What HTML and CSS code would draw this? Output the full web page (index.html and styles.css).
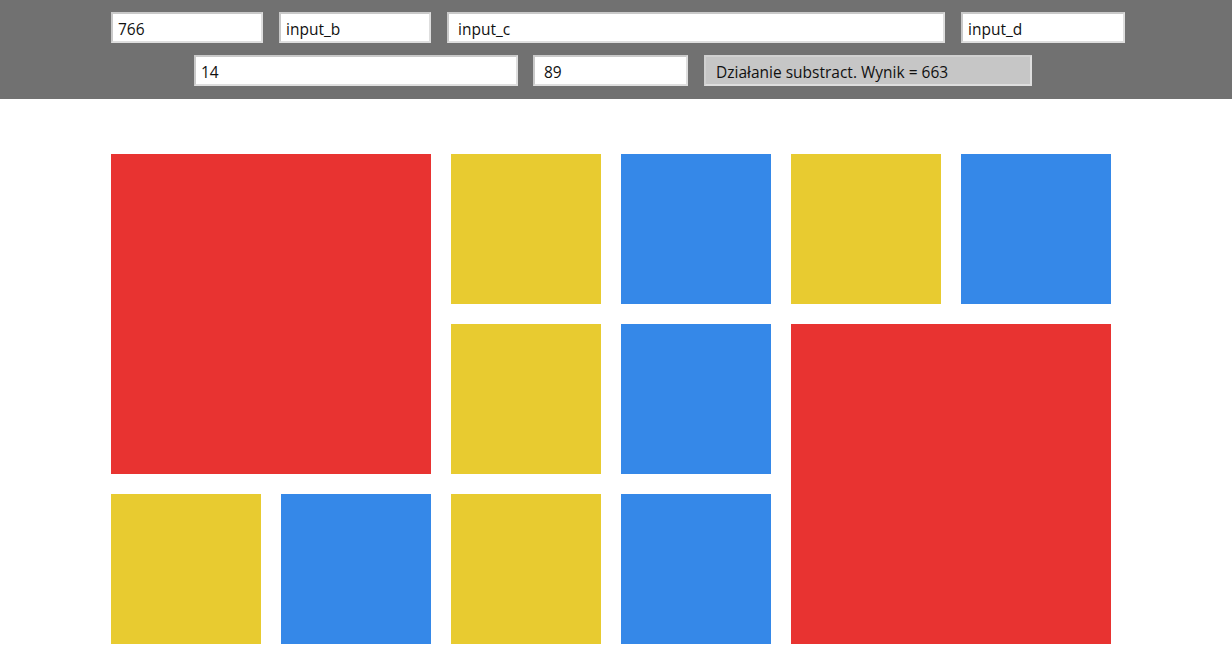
FILE: index.html
```html
<!DOCTYPE html>
<html lang="pl">
<head>
<meta charset="utf-8">
<title>Kalkulator</title>
<link rel="stylesheet" href="styles.css">
</head>
<body>
<header class="topbar">
  <div class="row row-one">
    <input class="field w-a" type="text" value="766">
    <input class="field w-b" type="text" value="input_b">
    <input class="field w-c wide-pad" type="text" value="input_c">
    <input class="field w-d" type="text" value="input_d">
  </div>
  <div class="row row-two">
    <input class="field w-e" type="text" value="14">
    <input class="field w-f wide-pad" type="text" value="89">
    <div class="result">Działanie substract. Wynik = 663</div>
  </div>
</header>
<main class="board">
  <div class="tile red big"></div>
  <div class="tile yellow"></div>
  <div class="tile blue"></div>
  <div class="tile yellow"></div>
  <div class="tile blue"></div>
  <div class="tile yellow"></div>
  <div class="tile blue"></div>
  <div class="tile red big"></div>
  <div class="tile yellow"></div>
  <div class="tile blue"></div>
  <div class="tile yellow"></div>
  <div class="tile blue"></div>
</main>
</body>
</html>
```
FILE: styles.css
```css
html, body {
  margin: 0;
  padding: 0;
  background: #ffffff;
  font-family: "Open Sans", "Noto Sans", sans-serif;
}
.topbar {
  background: #717171;
  height: 99px;
  box-sizing: border-box;
  padding-top: 12px;
  display: flex;
  flex-direction: column;
  gap: 12px;
}
.row {
  display: flex;
  justify-content: flex-start;
  gap: 16px;
  height: 31px;
}
.row-one { padding-left: 111px; }
.row-two { padding-left: 194px; gap: 15px; }
.field {
  box-sizing: border-box;
  height: 31px;
  margin: 0;
  border: 2px solid #dedede;
  border-top-color: #c9c9c9;
  border-left-color: #c9c9c9;
  background: #ffffff;
  color: #111111;
  font-family: "Open Sans", "Noto Sans", sans-serif;
  font-size: 15.5px;
  padding: 2px 5px 0 5px;
  outline: none;
}
.field.wide-pad { padding-left: 9px; }
.w-a { width: 152px; }
.w-b { width: 152px; }
.w-c { width: 498px; }
.w-d { width: 164px; }
.w-e { width: 324px; }
.w-f { width: 155px; }
.result {
  box-sizing: border-box;
  width: 328px;
  height: 31px;
  margin-left: 1px;
  border: 2px solid #dedede;
  border-top-color: #d0d0d0;
  border-left-color: #d0d0d0;
  background: #c6c6c6;
  color: #111111;
  font-size: 15.5px;
  padding: 3px 0 0 10px;
  line-height: 25px;
}
.board {
  display: grid;
  grid-template-columns: repeat(6, 150px);
  grid-auto-rows: 150px;
  gap: 20px;
  width: 1000px;
  margin: 55px 0 0 111px;
}
.tile.big {
  grid-column: span 2;
  grid-row: span 2;
}
.red { background: #e83331; }
.yellow { background: #e8cb30; }
.blue { background: #3588e8; }
```
